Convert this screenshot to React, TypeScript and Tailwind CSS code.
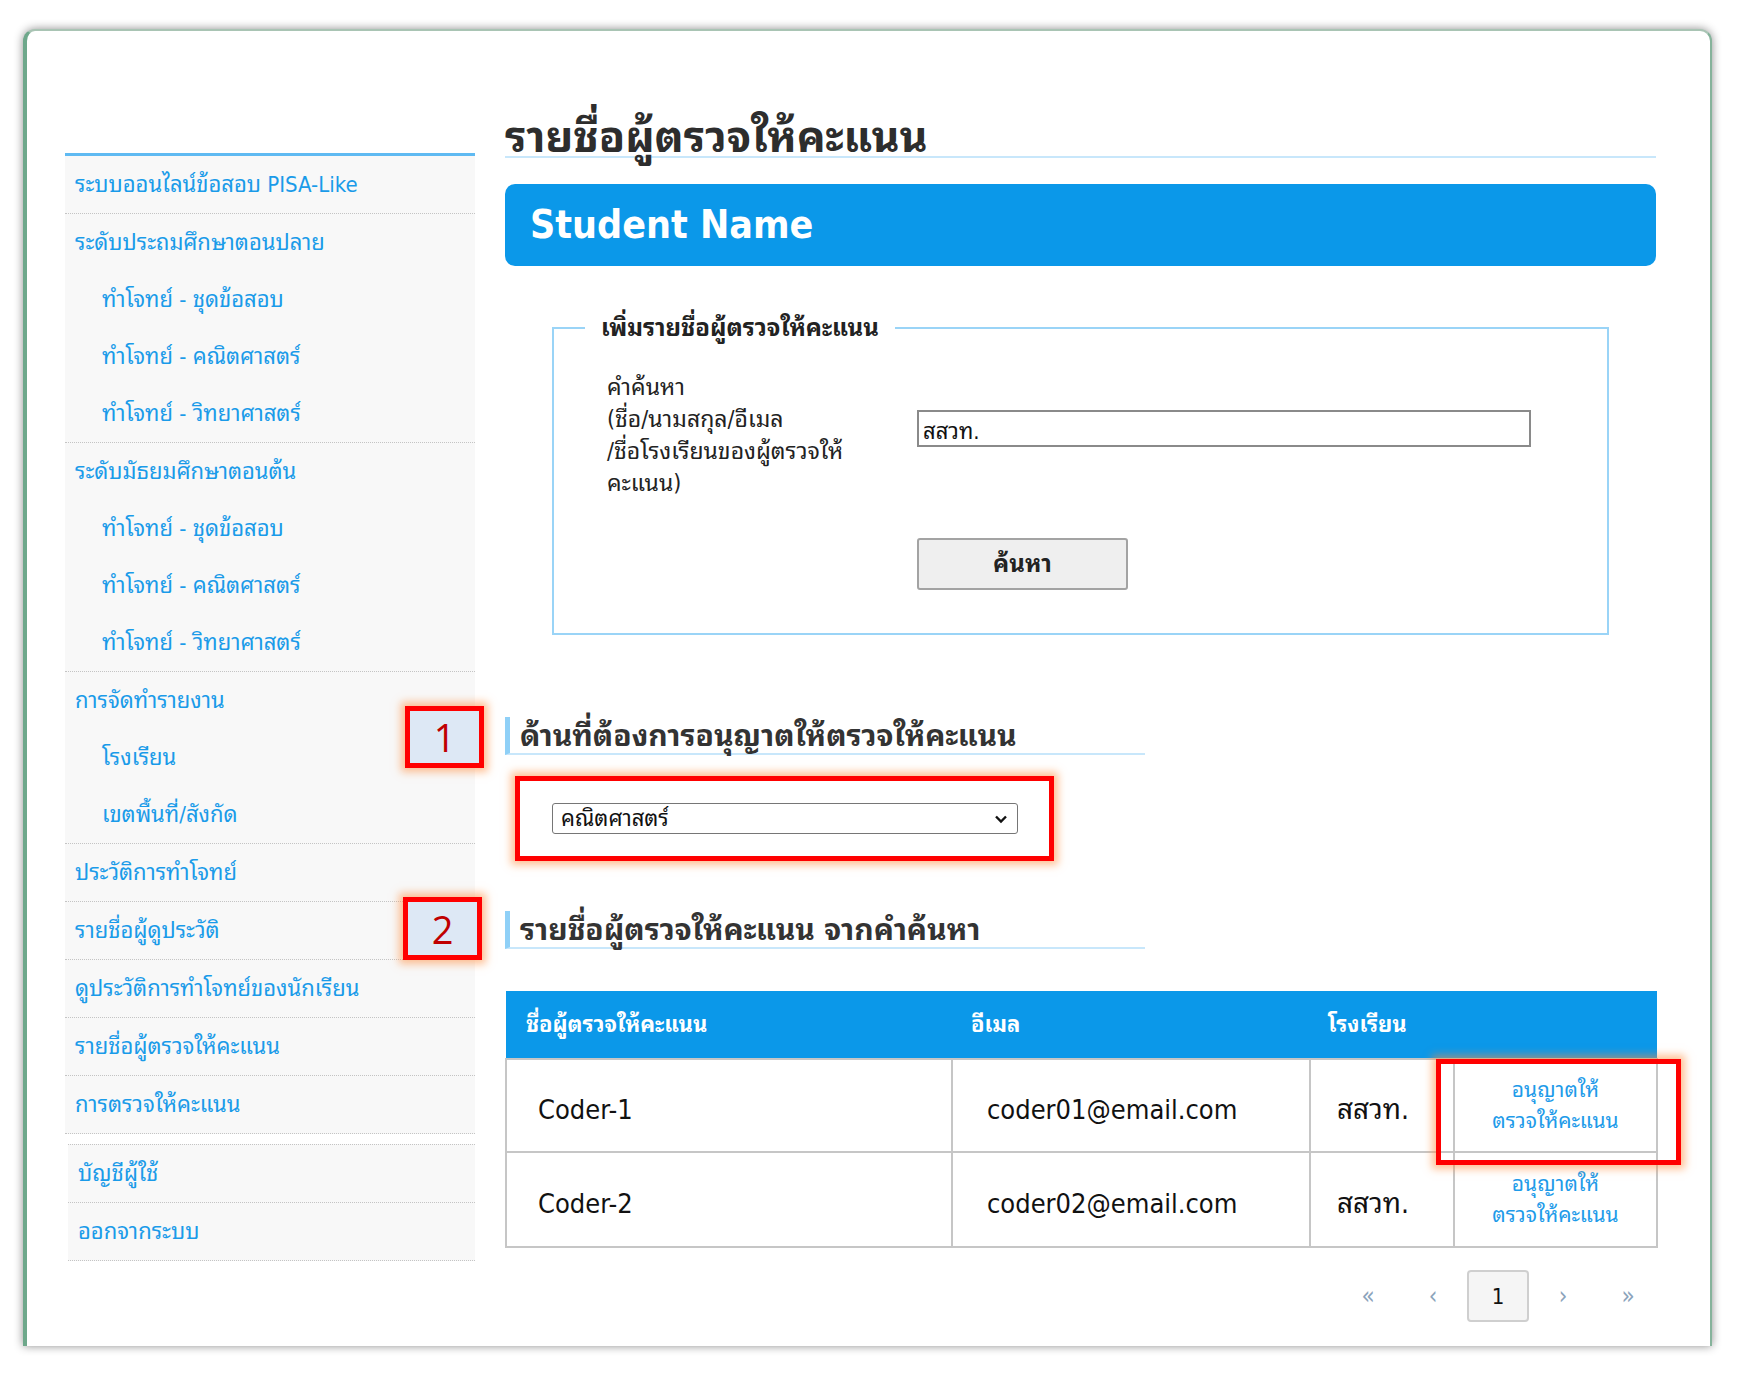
import React from "react";

const FONT =
  "font-['DejaVu_Sans_Condensed','Tahoma','Noto_Sans_Thai_Looped','Loma','Tlwg_Typo','Garuda','Kinnari','Norasi','Noto_Sans_Thai','Noto_Sans_Thai_UI',sans-serif]";

type Row = { text: string; sub?: boolean };

const sections: Row[][] = [
  [{ text: "ระบบออนไลน์ข้อสอบ PISA-Like" }],
  [
    { text: "ระดับประถมศึกษาตอนปลาย" },
    { text: "ทำโจทย์ - ชุดข้อสอบ", sub: true },
    { text: "ทำโจทย์ - คณิตศาสตร์", sub: true },
    { text: "ทำโจทย์ - วิทยาศาสตร์", sub: true },
  ],
  [
    { text: "ระดับมัธยมศึกษาตอนต้น" },
    { text: "ทำโจทย์ - ชุดข้อสอบ", sub: true },
    { text: "ทำโจทย์ - คณิตศาสตร์", sub: true },
    { text: "ทำโจทย์ - วิทยาศาสตร์", sub: true },
  ],
  [
    { text: "การจัดทำรายงาน" },
    { text: "โรงเรียน", sub: true },
    { text: "เขตพื้นที่/สังกัด", sub: true },
  ],
  [{ text: "ประวัติการทำโจทย์" }],
  [{ text: "รายชื่อผู้ดูประวัติ" }],
  [{ text: "ดูประวัติการทำโจทย์ของนักเรียน" }],
  [{ text: "รายชื่อผู้ตรวจให้คะแนน" }],
  [{ text: "การตรวจให้คะแนน" }],
];

const sections2: Row[][] = [[{ text: "บัญชีผู้ใช้" }], [{ text: "ออกจากระบบ" }]];

function SideSection({ rows }: { rows: Row[] }) {
  return (
    <div className="border-b border-dotted border-[#c4c4c4]">
      {rows.map((r, i) => (
        <div
          key={i}
          className={`flex h-[57px] items-center text-[22px] text-[#1a9be9] ${
            r.sub ? "pl-[37px]" : "pl-[10px]"
          }`}
        >
          {r.text}
        </div>
      ))}
    </div>
  );
}

function Heading({ children }: { children: React.ReactNode }) {
  return (
    <div className="flex h-[38px] w-[640px] items-center border-b-2 border-l-[5px] border-b-[#c8e7fb] border-l-[#8fd0f7] pl-[10px] text-[30px] font-bold text-[#333]">
      {children}
    </div>
  );
}

const users = [
  { name: "Coder-1", email: "coder01@email.com", school: "สสวท." },
  { name: "Coder-2", email: "coder02@email.com", school: "สสวท." },
];

export default function App() {
  return (
    <div className={`min-h-[1375px] w-[1741px] bg-white pl-[23px] pt-[29px] ${FONT}`}>
      <div className="relative flex w-[1689px] rounded-t-[12px] border-l-4 border-r-2 border-t-2 border-l-[#6ea88b] border-r-[#86b39b] border-t-[#a9c4b4] bg-white shadow-[0_0_10px_rgba(0,0,0,0.45)]">
        {/* Sidebar */}
        <aside className="ml-[38px] mt-[122px] w-[410px] shrink-0">
          <div className="border-t-[3px] border-[#5fbaf2] bg-[#f8f8f8]">
            {sections.map((s, i) => (
              <SideSection key={i} rows={s} />
            ))}
          </div>
          <div className="ml-[3px] mt-[10px] border-t border-dotted border-[#c4c4c4] bg-[#f8f8f8]">
            {sections2.map((s, i) => (
              <SideSection key={i} rows={s} />
            ))}
          </div>
        </aside>

        {/* Main */}
        <main className="ml-[30px] w-[1151px] shrink-0 pb-[24px] pt-[76px]">
          <div className="flex h-[51px] items-end border-b-2 border-[#c8e7fb]">
            <h1 className="mb-[-3px] text-[43px] font-bold leading-none text-[#2d2d2d]">
              รายชื่อผู้ตรวจให้คะแนน
            </h1>
          </div>

          <div className="mt-[26px] flex h-[82px] items-center rounded-[10px] bg-[#0b98e9] pl-[25px]">
            <span className="text-[39px] font-bold text-white">Student Name</span>
          </div>

          <fieldset className="mx-[47px] mt-[47px] border-2 border-[#9ad4f7] pb-[43px] pl-[53px]">
            <legend className="ml-[-22px] px-[16px] text-[24px] font-bold leading-[30px] text-[#222]">
              เพิ่มรายชื่อผู้ตรวจให้คะแนน
            </legend>
            <div className="mt-[28px] flex">
              <div className="w-[310px] shrink-0 text-[23px] leading-[32px] text-[#222]">
                <div>คำค้นหา</div>
                <div>(ชื่อ/นามสกุล/อีเมล</div>
                <div>/ชื่อโรงเรียนของผู้ตรวจให้</div>
                <div>คะแนน)</div>
              </div>
              <input
                readOnly
                value="สสวท."
                className="mt-[39px] h-[37px] w-[614px] border-2 border-[#8a8a8a] px-[4px] text-[22px] text-[#111] outline-none"
              />
            </div>
            <button className="ml-[310px] mt-[39px] flex h-[52px] w-[211px] items-center justify-center rounded-[3px] border-2 border-[#a3a3a3] bg-[#efefef] text-[24px] font-bold text-[#222]">
              ค้นหา
            </button>
          </fieldset>

          <div className="mt-[82px]">
            <Heading>ด้านที่ต้องการอนุญาตให้ตรวจให้คะแนน</Heading>
          </div>

          <div className="ml-[10px] mt-[21px] flex h-[85px] w-[539px] items-center border-[5px] border-[#ff0000] pl-[32px] shadow-[0_0_8px_4px_rgba(255,140,60,0.55)]">
            <div className="flex h-[31px] w-[466px] items-center justify-between rounded-[3px] border border-[#767676] bg-white pl-[8px] pr-[8px] text-[22px] text-[#111]">
              <span>คณิตศาสตร์</span>
              <svg width="16" height="16" viewBox="0 0 16 16">
                <polyline points="3,5.5 8,10.5 13,5.5" fill="none" stroke="#111" strokeWidth="2.4" />
              </svg>
            </div>
          </div>

          <div className="mt-[50px]">
            <Heading>รายชื่อผู้ตรวจให้คะแนน จากคำค้นหา</Heading>
          </div>

          <table className="mt-[42px] w-[1151px] table-fixed border-collapse">
            <colgroup>
              <col className="w-[446px]" />
              <col className="w-[358px]" />
              <col className="w-[144px]" />
              <col className="w-[203px]" />
            </colgroup>
            <thead>
              <tr className="h-[68px] bg-[#0b98e9] text-left text-[22px] font-bold text-white">
                <th className="pl-[20px] font-bold">ชื่อผู้ตรวจให้คะแนน</th>
                <th className="pl-[19px] font-bold">อีเมล</th>
                <th className="pl-[18px] font-bold">โรงเรียน</th>
                <th></th>
              </tr>
            </thead>
            <tbody>
              {users.map((u, i) => (
                <tr key={i} className={i === 0 ? "h-[93px]" : "h-[95px]"}>
                  <td className="border-2 border-[#c6c6c6] pl-[31px] pt-[9px] text-[27px] text-[#111]">{u.name}</td>
                  <td className="border-2 border-[#c6c6c6] pl-[34px] pt-[9px] text-[27px] text-[#111]">{u.email}</td>
                  <td className="border-2 border-[#c6c6c6] pl-[26px] pt-[9px] text-[28px] text-[#111]">{u.school}</td>
                  <td className="border-2 border-[#c6c6c6] text-center text-[21px] leading-[31px] text-[#1e9be9]">
                    <div>อนุญาตให้</div>
                    <div>ตรวจให้คะแนน</div>
                  </td>
                </tr>
              ))}
            </tbody>
          </table>

          <div className="mr-[-3px] mt-[22px] flex items-center justify-end gap-[3px]">
            <span className="flex h-[52px] w-[62px] items-center justify-center text-[24px] text-[#8ba3bb]">«</span>
            <span className="flex h-[52px] w-[62px] items-center justify-center text-[24px] text-[#8ba3bb]">‹</span>
            <span className="flex h-[52px] w-[62px] items-center justify-center rounded-[4px] border-2 border-[#cfcfcf] bg-[#f5f5f5] text-[22px] text-[#111]">
              1
            </span>
            <span className="flex h-[52px] w-[62px] items-center justify-center text-[24px] text-[#8ba3bb]">›</span>
            <span className="flex h-[52px] w-[62px] items-center justify-center text-[24px] text-[#8ba3bb]">»</span>
          </div>
        </main>

        {/* Annotation overlays */}
        <div className="absolute left-[378px] top-[675px] flex h-[62px] w-[79px] items-center justify-center border-[5px] border-[#ff0000] bg-[#dde8f5] font-['Open_Sans',sans-serif] text-[38px] leading-none text-[#c00000] shadow-[0_0_8px_4px_rgba(255,140,60,0.55)]">
          1
        </div>
        <div className="absolute left-[376px] top-[866px] flex h-[63px] w-[79px] items-center justify-center border-[5px] border-[#ff0000] bg-[#dde8f5] font-['Open_Sans',sans-serif] text-[38px] leading-none text-[#c00000] shadow-[0_0_8px_4px_rgba(255,140,60,0.55)]">
          2
        </div>
        <div className="pointer-events-none absolute left-[1409px] top-[1028px] h-[106px] w-[245px] border-[5px] border-[#ff0000] shadow-[0_0_8px_4px_rgba(255,140,60,0.55)]"></div>
      </div>
    </div>
  );
}
